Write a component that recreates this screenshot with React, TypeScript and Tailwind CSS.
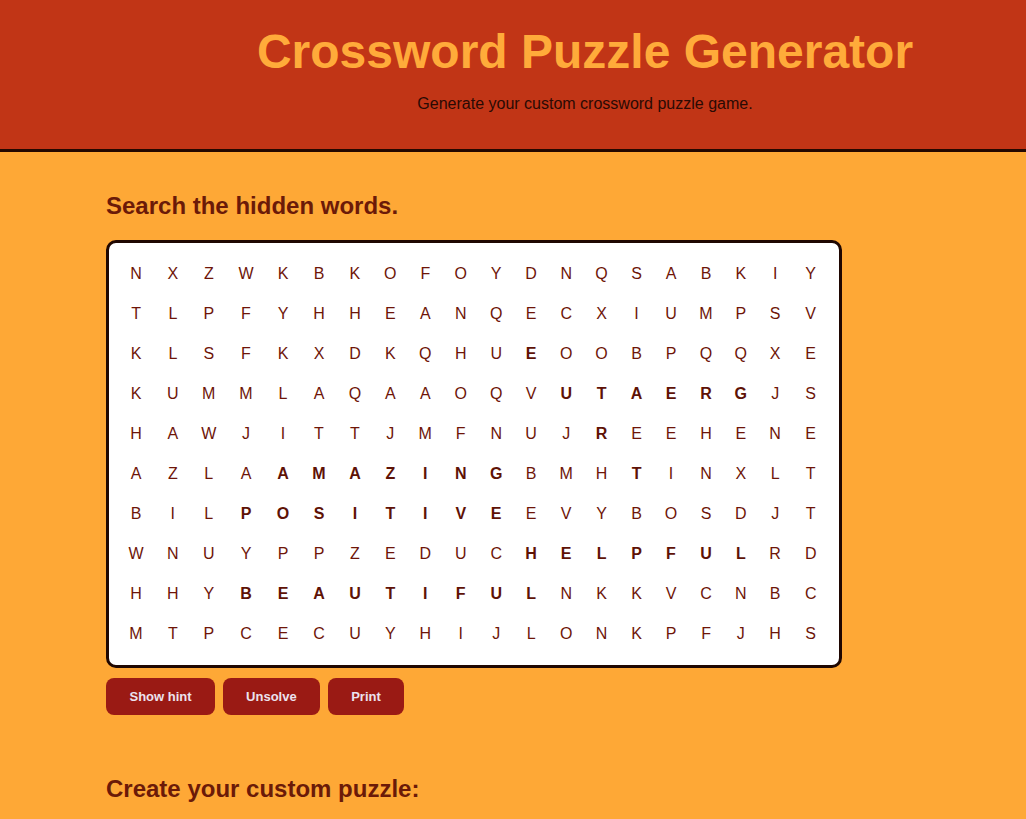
const ROWS = [
  "NXZWKBKOFOYDNQSABKIY",
  "TLPFYHHEANQECXIUMPSV",
  "KLSFKXDKQHUEOOBPQQXE",
  "KUMMLAQAAOQVUTAERGJS",
  "HAWJITTJMFNUJREEHENE",
  "AZLAAMAZINGBMHTINXLT",
  "BILPOSITIVEEVYBOSDJT",
  "WNUYPPZEDUCHELPFULRD",
  "HHYBEAUTIFULNKKVCNBC",
  "MTPCECUYHIJLONKPFJHS",
];

// [row, from, to] inclusive ranges of found letters
const FOUND: [number, number, number][] = [
  [2, 11, 11],
  [3, 12, 17],
  [4, 13, 13],
  [5, 4, 10],
  [5, 14, 14],
  [6, 3, 10],
  [7, 11, 17],
  [8, 3, 11],
];

function isFound(r: number, c: number) {
  return FOUND.some(([row, a, b]) => row === r && c >= a && c <= b);
}

function Header() {
  return (
    <header className="border-b-[3px] border-[#240800] bg-[#c13516] pb-[36px] pl-[144px] pt-[24px] text-center">
      <h1 className="text-[48px] font-bold leading-[56px] text-[#ffab3a]">
        Crossword Puzzle Generator
      </h1>
      <p className="mt-[15px] text-base leading-[18px] text-[#2a0a04]">
        Generate your custom crossword puzzle game.
      </p>
    </header>
  );
}

function Board() {
  return (
    <div className="w-[736px] rounded-[10px] border-[3px] border-[#1f0701] bg-white pb-[11px] pl-[8px] pr-[10px] pt-[11px]">
      <div className="grid grid-cols-[38fr_35.5fr_36.25fr_38fr_36fr_35.75fr_36fr_34.75fr_35fr_35.75fr_35fr_34.75fr_35.25fr_35.5fr_34.25fr_34.5fr_35.5fr_34fr_34.5fr_36.5fr]">
        {ROWS.map((row, r) =>
          row.split("").map((ch, c) => (
            <div
              key={`${r}-${c}`}
              className={
                isFound(r, c)
                  ? "h-10 text-center text-base font-bold leading-10 text-[#5e1206]"
                  : "h-10 text-center text-base leading-10 text-[#6e1508]"
              }
            >
              {ch}
            </div>
          ))
        )}
      </div>
    </div>
  );
}

export default function App() {
  return (
    <div className="min-h-[819px] bg-[#fea836] font-['Liberation_Sans',Arial,sans-serif]">
      <Header />
      <main className="px-[106px] pt-[40px]">
        <h2 className="text-2xl font-bold leading-7 text-[#6b1a08]">Search the hidden words.</h2>
        <div className="mt-[20px]">
          <Board />
        </div>
        <div className="mt-[10px] flex gap-[7.5px]">
          {["Show hint", "Unsolve", "Print"].map((t) => (
            <button
              key={t}
              type="button"
              className="rounded-lg bg-[#9a1a14] px-[23.5px] py-[11px] text-[13px] font-bold leading-[15px] text-[#ece3ee]"
            >
              {t}
            </button>
          ))}
        </div>
        <h2 className="mt-[60px] text-2xl font-bold leading-7 text-[#6b1a08]">
          Create your custom puzzle:
        </h2>
      </main>
    </div>
  );
}
